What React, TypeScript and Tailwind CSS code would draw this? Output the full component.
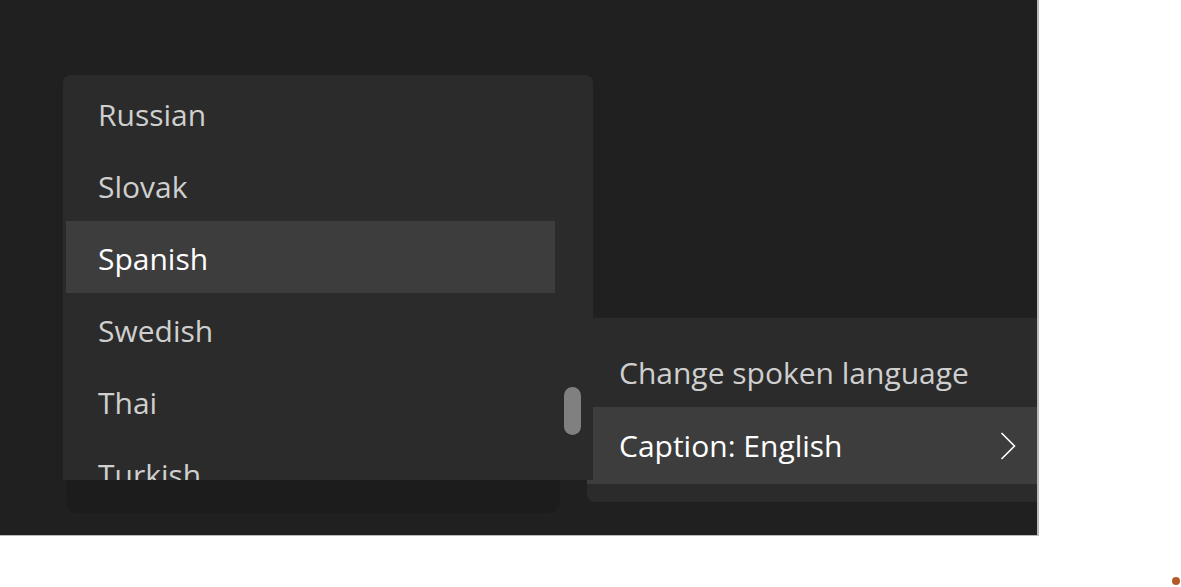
const languages = ["Russian", "Slovak", "Spanish", "Swedish", "Thai", "Turkish"];

function Chevron() {
  return (
    <svg width="16" height="30" viewBox="0 0 16 30" fill="none" className="shrink-0">
      <path d="M1.5 2 L14.5 15 L1.5 28" stroke="#ffffff" strokeWidth="1.6" />
    </svg>
  );
}

export default function App() {
  return (
    <div className="relative h-[587px] w-[1181px] overflow-hidden bg-white font-['Open_Sans',sans-serif]">
      <div className="relative h-[536px] w-[1039px] overflow-hidden border-b border-r-2 border-[#b9b9b9] bg-[#202020]">
        {/* shadow under the language list */}
        <div className="absolute left-[66px] top-[440px] h-[73px] w-[494px] rounded-b-xl bg-[#1c1c1c]" />

        {/* caption submenu */}
        <div className="absolute left-[587px] top-[318px] flex h-[184px] w-[480px] flex-col rounded-lg bg-[#2b2b2b] pt-[17px]">
          <div className="flex h-[72px] items-center pl-[32px] pt-[2px] text-[30px] text-[#cfcfcf]">
            Change spoken language
          </div>
          <div className="flex h-[77px] items-center justify-between bg-[#3d3d3d] pl-[32px] pr-[51px] text-[30px] text-white">
            <span>Caption: English</span>
            <Chevron />
          </div>
        </div>

        {/* language list */}
        <div className="absolute left-[63px] top-[75px] flex h-[405px] w-[530px] flex-col overflow-hidden rounded-t-lg bg-[#2b2b2b] pt-[2px]">
          {languages.map((lang) => (
            <div
              key={lang}
              className={
                lang === "Spanish"
                  ? "ml-[3px] flex h-[72px] w-[489px] shrink-0 items-center bg-[#3d3d3d] pl-[32px] pt-[3px] text-[30px] text-white"
                  : "ml-[3px] flex h-[72px] w-[489px] shrink-0 items-center pl-[32px] pt-[3px] text-[30px] text-[#cfcfcf]"
              }
            >
              {lang}
            </div>
          ))}
          <div className="absolute left-[501px] top-[312px] h-[48px] w-[17px] rounded-full bg-[#808080]" />
        </div>
      </div>
      <div className="absolute left-[1172px] top-[577px] h-[8px] w-[8px] rounded-full bg-[#b35a2c]" />
    </div>
  );
}
